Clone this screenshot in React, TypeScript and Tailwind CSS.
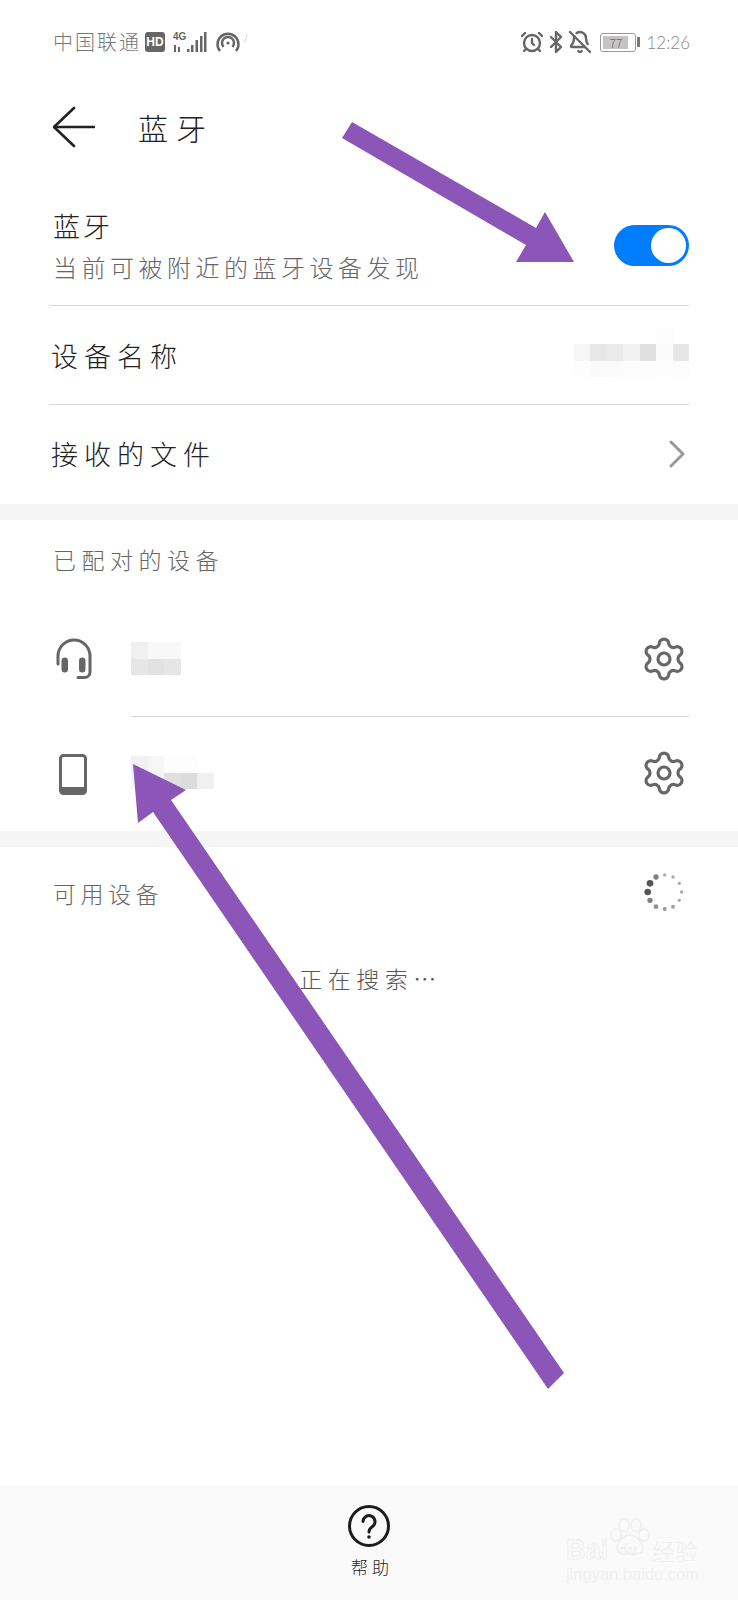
import { Settings, AlarmClock, Bluetooth, BellOff } from 'lucide-react';

const SPINNER = [
    { x: 142, y: 847, r: 10, c: '#555555' },
    { x: 149, y: 821, r: 10, c: '#555555' },
    { x: 167, y: 802, r: 8, c: '#808080' },
    { x: 193, y: 796, r: 5, c: '#aaaaaa' },
    { x: 218, y: 802, r: 5, c: '#aaaaaa' },
    { x: 237, y: 821, r: 5, c: '#aaaaaa' },
    { x: 244, y: 847, r: 5, c: '#aaaaaa' },
    { x: 237, y: 872, r: 5, c: '#aaaaaa' },
    { x: 218, y: 891, r: 6, c: '#a0a0a0' },
    { x: 193, y: 898, r: 6, c: '#999999' },
    { x: 167, y: 891, r: 7, c: '#909090' },
    { x: 149, y: 872, r: 8, c: '#808080' },
];

function Mosaic(props: { rows: string[][] }) {
    return (
        <div className="flex flex-col">
            {props.rows.map((row, i) => (
                <div key={i} className="flex">
                    {row.map((c, j) => (
                        <div key={j} className="w-[16.5px] h-[16.5px]" style={{ backgroundColor: c }} />
                    ))}
                </div>
            ))}
        </div>
    );
}

function Headset() {
    return (
        <svg width="38" height="42" viewBox="0 0 38 42" fill="none" stroke="#666666" strokeWidth="3" strokeLinecap="round">
            <path d="M3 26 V18 a16 16 0 0 1 32 0 V34 a5.5 5.5 0 0 1 -5.5 5.5 H23" />
            <rect x="8" y="21" width="3.5" height="12" rx="1.75" fill="#666666" />
            <rect x="25.5" y="21" width="3.5" height="12" rx="1.75" fill="#666666" />
        </svg>
    );
}

function Phone() {
    return (
        <svg width="28" height="41" viewBox="0 0 28 41" fill="none">
            <rect x="1.5" y="1.5" width="25" height="38" rx="3" stroke="#666666" strokeWidth="3" />
            <rect x="1.5" y="33" width="25" height="6.5" fill="#666666" />
        </svg>
    );
}

function Baidu() {
    return (
        <div className="absolute left-[566px] top-[33px] w-[134px] h-[66px]">
            <svg className="absolute left-[43px] top-0" width="42" height="38" viewBox="0 0 42 38" fill="#fafafa" stroke="#efefef" strokeWidth="1.5">
                <ellipse cx="7" cy="17" rx="5" ry="6" />
                <ellipse cx="15" cy="7" rx="5" ry="6.5" />
                <ellipse cx="27" cy="7" rx="5" ry="6.5" />
                <ellipse cx="35" cy="17" rx="5" ry="6" />
                <path d="M21 17 C14 17 8 25 8 31 C8 36 14 36 21 35 C28 36 34 36 34 31 C34 25 28 17 21 17 Z" />
            </svg>
            <div className="absolute left-0 top-[17px] font-['Liberation_Sans',sans-serif] font-bold text-[27px] leading-[30px] text-[#fafafa] [-webkit-text-stroke:1px_#efefef]">
                Bai
            </div>
            <div className="absolute left-[53px] top-[23px] font-['Liberation_Sans',sans-serif] font-bold text-[15px] leading-[18px] text-[#fafafa] [-webkit-text-stroke:0.6px_#eaeaea]">
                du
            </div>
            <div className="absolute left-[86px] top-[18px] text-[23px] leading-[28px] text-[#f0f0f0]">经验</div>
            <div className="absolute left-0 top-[47px] font-['Liberation_Sans',sans-serif] text-[16.5px] leading-[19px] text-[#f0f0f0]">
                jingyan.baidu.com
            </div>
        </div>
    );
}

export default function App() {
    return (
        <div className="relative w-[738px] h-[1600px] bg-white flex flex-col overflow-hidden font-['Noto_Sans_CJK_SC',sans-serif] font-light">
            {/* status bar */}
            <div className="h-[84px] pl-[53px] pr-[48px] flex items-center justify-between text-[#777777]">
                <div className="flex items-center">
                    <span className="text-[20px] tracking-[2px] leading-none">中国联通</span>
                    <span className="ml-[4px] w-[20px] h-[20px] rounded-[3px] bg-[#666666] text-white text-[12px] font-bold leading-[20px] text-center font-['Liberation_Sans',sans-serif]">
                        HD
                    </span>
                    <svg className="ml-[8px]" width="34" height="22" viewBox="0 0 34 22" fill="#666666">
                        <text x="0" y="9" fontSize="10" fontWeight="700" fontFamily="Liberation Sans">4G</text>
                        <rect x="1" y="14" width="2" height="7" />
                        <rect x="5" y="16" width="2" height="5" />
                        <rect x="14" y="18" width="2.5" height="3" />
                        <rect x="18" y="14" width="2.5" height="7" />
                        <rect x="22.5" y="9" width="2.5" height="12" />
                        <rect x="27" y="5" width="2.5" height="16" />
                        <rect x="31" y="1" width="2.5" height="20" />
                    </svg>
                    <svg className="ml-[8px]" width="26" height="22" viewBox="0 0 26 22" fill="none" stroke="#666666" strokeWidth="2.5">
                        <path d="M5 20 A10.5 10.5 0 1 1 21 20" />
                        <path d="M8.5 16 A6 6 0 1 1 17.5 16" />
                        <circle cx="13" cy="12" r="1.6" fill="#666666" stroke="none" />
                    </svg>
                    <span className="ml-[3px] -mt-[10px] text-[9px] leading-none text-[#aaaaaa]">/</span>
                </div>
                <div className="flex items-center">
                    <AlarmClock size={24} strokeWidth={2.4} color="#666666" />
                    <Bluetooth size={24} strokeWidth={2.4} color="#666666" />
                    <BellOff size={24} strokeWidth={2.4} color="#666666" />
                    <div className="ml-[8px] w-[36px] h-[19px] border border-[#999999] rounded-[3px] p-[2px] flex">
                        <div className="w-[25px] h-full bg-[#c4c4c4] text-[12px] leading-[13px] text-center text-[#666666]">77</div>
                    </div>
                    <div className="ml-[1px] w-[3px] h-[10px] bg-[#777777]" />
                    <span className="ml-[6px] font-['Lato',sans-serif] font-light text-[17px] leading-none text-[#888888]">12:26</span>
                </div>
            </div>

            {/* title bar */}
            <div className="h-[86px] pl-[53px] flex items-center">
                <svg width="42" height="42" viewBox="0 0 42 42" fill="none" stroke="#222222" strokeWidth="2.6" strokeLinecap="round" strokeLinejoin="round">
                    <path d="M21 2 L1 21 L21 40" />
                    <path d="M1 21 H41" />
                </svg>
                <span className="ml-[43px] text-[30px] tracking-[8px] leading-none text-[#222222]">蓝牙</span>
            </div>

            {/* bluetooth switch + rows */}
            <div className="px-[49px]">
                <div className="h-[136px] flex items-center justify-between border-b border-[#d8d8d8] pt-[16px]">
                    <div className="pl-[4px] flex flex-col">
                        <span className="text-[27px] tracking-[3px] leading-[34px] text-[#222222]">蓝牙</span>
                        <span className="mt-[8px] text-[24px] tracking-[4.5px] leading-[32px] text-[#666666]">当前可被附近的蓝牙设备发现</span>
                    </div>
                    <div className="w-[75px] h-[41px] rounded-full bg-[#007dff] flex items-center justify-end pr-[3px]">
                        <div className="w-[35px] h-[35px] rounded-full bg-white" />
                    </div>
                </div>
                <div className="h-[99px] flex items-center justify-between border-b border-[#d8d8d8] pl-[2px]">
                    <span className="text-[27px] tracking-[6px] leading-none text-[#222222]">设备名称</span>
                    <div className="mb-[5px]">
                        <Mosaic
                            rows={[
                                ['#ffffff', '#ffffff', '#ffffff', '#ffffff', '#ffffff', '#fcfcfc', '#ffffff'],
                                ['#f6f6f6', '#e8e8e8', '#eaeaea', '#f2f2f2', '#e0e0e0', '#fbfbfb', '#e6e6e6'],
                                ['#fdfdfd', '#fafafa', '#fbfbfb', '#fcfcfc', '#fcfcfc', '#fdfdfd', '#fcfcfc'],
                            ]}
                        />
                    </div>
                </div>
                <div className="h-[99px] flex items-center justify-between pl-[2px] pr-[3px] pb-[2px]">
                    <span className="text-[27px] tracking-[6px] leading-none text-[#222222]">接收的文件</span>
                    <svg width="18" height="28" viewBox="0 0 18 28" fill="none" stroke="#999999" strokeWidth="3" strokeLinecap="round" strokeLinejoin="round">
                        <path d="M3 2 L15 14 L3 26" />
                    </svg>
                </div>
            </div>

            <div className="h-[16px] bg-[#f5f5f5]" />

            {/* paired devices */}
            <div className="h-[84px] pl-[53px] pb-[6px] flex items-center">
                <span className="text-[23px] tracking-[5.5px] leading-none text-[#666666]">已配对的设备</span>
            </div>
            <div className="pl-[49px] pr-[49px]">
                <div className="h-[113px] flex items-center">
                    <div className="w-[82px] pl-[6px] mb-[3px]">
                        <Headset />
                    </div>
                    <div className="flex-1 h-full flex items-center justify-between border-b border-[#d8d8d8] pb-[3px]">
                        <Mosaic rows={[['#f0f0f0', '#f8f8f8', '#f8f8f8'], ['#e6e6e6', '#e2e2e2', '#e6e6e6']]} />
                        <Settings size={48} strokeWidth={1.6} color="#666666" className="mr-[1px]" />
                    </div>
                </div>
                <div className="h-[114px] flex items-center">
                    <div className="w-[82px] pl-[10px]">
                        <Phone />
                    </div>
                    <div className="flex-1 h-full flex items-center justify-between pb-[3px]">
                        <Mosaic rows={[['#f0f0f0', '#f6f6f6', '#fdfdfd', '#fdfdfd', '#ffffff'], ['#f4f4f4', '#f4f4f4', '#e0e0e0', '#dcdcdc', '#f0f0f0']]} />
                        <Settings size={48} strokeWidth={1.6} color="#666666" className="mr-[1px]" />
                    </div>
                </div>
            </div>

            <div className="h-[16px] bg-[#f5f5f5]" />

            {/* available devices */}
            <div className="h-[96px] pl-[53px] pr-[49px] flex items-center justify-between">
                <span className="text-[23px] tracking-[4.5px] leading-none text-[#666666] mb-[4px]">可用设备</span>
                <svg className="mb-[6px] mr-[6px]" width="40" height="40" viewBox="128 792 120 110">
                    {SPINNER.map((d, i) => (
                        <circle key={i} cx={d.x} cy={d.y} r={d.r} fill={d.c} />
                    ))}
                </svg>
            </div>
            <div className="flex justify-center pl-[3px] pt-[18px]">
                <span className="text-[23px] tracking-[5.5px] leading-[34px] text-[#555555]">正在搜索…</span>
            </div>

            {/* help footer */}
            <div className="relative mt-auto h-[115px] bg-[#fafafa] flex flex-col items-center pt-[20px]">
                <svg width="42" height="42" viewBox="0 0 42 42" fill="none" stroke="#1c1c1c" strokeWidth="3" strokeLinecap="round">
                    <circle cx="21" cy="21" r="19.5" />
                    <path d="M15 16.5 a6 6 0 1 1 9.5 5 c-2 1.5 -3.5 2.5 -3.5 5.5" />
                    <circle cx="21" cy="32" r="1.8" fill="#1c1c1c" stroke="none" />
                </svg>
                <span className="mt-[9px] pl-[6px] text-[17px] tracking-[4px] leading-[22px] text-[#222222]">帮助</span>
                <Baidu />
            </div>

            {/* annotation arrows */}
            <svg className="absolute left-0 top-0 pointer-events-none" width="738" height="1600" viewBox="0 0 738 1600" fill="#8c55b8">
                <polygon points="352,122 536,228 545,212 574,262 516,262 526,245 342,138" />
                <polygon points="133,764 186,790 171,800 564,1373 548,1389 153,812 138,823" />
            </svg>
        </div>
    );
}
